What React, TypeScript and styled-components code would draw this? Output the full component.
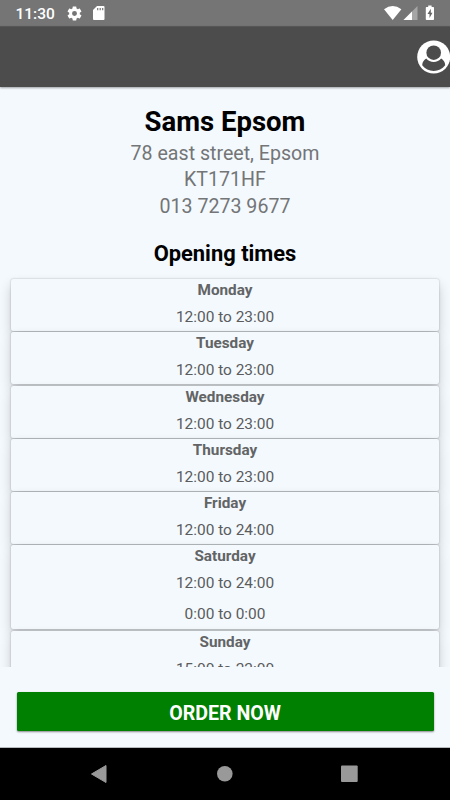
import React from "react";
import styled, { createGlobalStyle } from "styled-components";

const Global = createGlobalStyle`
  * { box-sizing: border-box; }
  html, body { margin: 0; padding: 0; overflow: hidden; }
  body { font-family: Roboto, "Liberation Sans", sans-serif; }
`;

const Screen = styled.div`
  width: 450px;
  height: 800px;
  display: flex;
  flex-direction: column;
  background: #f4f9fe;
`;

const StatusBar = styled.header`
  height: 26px;
  flex: none;
  display: flex;
  align-items: center;
  padding: 0 14px 0 15.5px;
  background: #757575;
  color: #fff;
`;

const Clock = styled.span`
  width: 50px;
  font-size: 15.5px;
  font-weight: 500;
  line-height: 26px;
  padding-top: 2px;
`;

const StatusIcons = styled.div<{ $end?: boolean }>`
  display: flex;
  align-items: center;
  gap: ${(p) => (p.$end ? "1px" : "9px")};
  margin-left: ${(p) => (p.$end ? "auto" : "0")};
  svg { display: block; }
  svg:nth-child(3) { margin-left: 5px; }
`;

const AppBar = styled.nav`
  height: 61px;
  flex: none;
  display: flex;
  align-items: center;
  justify-content: flex-end;
  background: #4c4c4c;
  border-top: 1px solid #565656;
  box-shadow: 0 1px 2px rgba(0, 0, 0, 0.35);
  z-index: 1;
  svg { display: block; }
`;

const Content = styled.main`
  height: 580px;
  flex: none;
  overflow: hidden;
  text-align: center;
  padding-top: 17px;
`;

const Title = styled.h1`
  margin: 0;
  font-size: 27.5px;
  line-height: 36px;
  font-weight: 700;
  color: #000;
`;

const Address = styled.address`
  font-style: normal;
  font-size: 19.6px;
  line-height: 26.4px;
  font-weight: 400;
  color: #737576;
  padding-top: 0.8px;
`;

const Subtitle = styled.h2`
  margin: 20.5px 0 12.4px;
  font-size: 21.9px;
  line-height: 26px;
  font-weight: 700;
  color: #000;
`;

const DayList = styled.section`
  display: flex;
  flex-direction: column;
  gap: 1.3px;
  margin: 0 11px;
`;

const DayCard = styled.article`
  border-radius: 2px;
  background: #f4f9fe;
  box-shadow: 0 0 2px rgba(0, 0, 0, 0.28), 0 6px 12px rgba(0, 0, 0, 0.19);
  position: relative;
`;

const DayName = styled.h3`
  margin: 0;
  font-size: 15.3px;
  line-height: 22.4px;
  height: 22px;
  font-weight: 700;
  color: #626465;
`;

const Hours = styled.p`
  margin: 0;
  height: 30px;
  font-size: 15.45px;
  line-height: 33px;
  font-weight: 400;
  color: #5a5c5d;
  & + & { height: 32px; line-height: 35px; }
`;

const Footer = styled.footer`
  height: 81px;
  flex: none;
  padding: 25px 16.5px 0;
  background: #f4f9fe;
  border-bottom: 1px solid #b5babd;
  position: relative;
`;

const OrderButton = styled.button`
  display: block;
  width: 100%;
  height: 39px;
  border: 0;
  border-radius: 1.5px;
  padding: 3px 0 0;
  background: #008000;
  color: #fff;
  font: 700 19.6px/38px Roboto, "Liberation Sans", sans-serif;
  box-shadow: 0 1px 2px rgba(0, 0, 0, 0.45);
`;

const SystemNav = styled.div`
  height: 52px;
  flex: none;
  display: grid;
  grid-template-columns: 162px 125px 163px;
  background: #000;
  svg { display: block; }
`;

const days = [
  { name: "Monday", hours: ["12:00 to 23:00"] },
  { name: "Tuesday", hours: ["12:00 to 23:00"] },
  { name: "Wednesday", hours: ["12:00 to 23:00"] },
  { name: "Thursday", hours: ["12:00 to 23:00"] },
  { name: "Friday", hours: ["12:00 to 24:00"] },
  { name: "Saturday", hours: ["12:00 to 24:00", "0:00 to 0:00"] },
  { name: "Sunday", hours: ["15:00 to 22:00"] },
];

const GearIcon = () => (
  <svg width="17" height="17" viewBox="0 0 24 24" fill="#fff">
    <path d="M19.43 12.98c.04-.32.07-.64.07-.98s-.03-.66-.07-.98l2.11-1.65c.19-.15.24-.42.12-.64l-2-3.46c-.12-.22-.39-.3-.61-.22l-2.49 1c-.52-.4-1.08-.73-1.69-.98l-.38-2.65C14.46 2.18 14.25 2 14 2h-4c-.25 0-.46.18-.49.42l-.38 2.65c-.61.25-1.17.59-1.69.98l-2.49-1c-.23-.09-.49 0-.61.22l-2 3.46c-.13.22-.07.49.12.64l2.11 1.65c-.04.32-.07.65-.07.98s.03.66.07.98l-2.11 1.65c-.19.15-.24.42-.12.64l2 3.46c.12.22.39.3.61.22l2.49-1c.52.4 1.08.73 1.69.98l.38 2.65c.03.24.24.42.49.42h4c.25 0 .46-.18.49-.42l.38-2.65c.61-.25 1.17-.59 1.69-.98l2.49 1c.23.09.49 0 .61-.22l2-3.46c.12-.22.07-.49-.12-.64l-2.11-1.65zM12 15.5A3.5 3.5 0 1 1 12 8.500a3.500 3.500 0 0 1 0 7z" />
  </svg>
);

const CardIcon = () => (
  <svg width="14" height="16" viewBox="0 0 14 16">
    <path d="M5 1h6.500a1 1 0 0 1 1 1v12a1 1 0 0 1-1 1h-9.500a1 1 0 0 1-1-1V5z" fill="#fff" />
    <path d="M5.700 3v2.200M8.200 3v2.200M10.700 3v2.200" stroke="#757575" strokeWidth="1.200" />
  </svg>
);

const WifiIcon = () => (
  <svg width="19" height="16" viewBox="0 0 19 16">
    <path d="M1 4.200Q9.700-2.200 18.400 4.200L9.700 15z" fill="#fff" />
  </svg>
);

const SignalIcon = () => (
  <svg width="15" height="16" viewBox="0 0 15 16">
    <path d="M14.500 1v14H.5z" fill="#a5a5a5" />
    <path d="M9 6.500V15H.5z" fill="#fff" />
  </svg>
);

const BatteryIcon = () => (
  <svg width="12" height="16" viewBox="0 0 12 16">
    <path d="M4.200.5h3.400V2H9.200a.8.800 0 0 1 .8.800v11.400a.8.800 0 0 1-.8.800H2.600a.8.800 0 0 1-.8-.8V2.800A.8.800 0 0 1 2.600 2h1.600z" fill="#fff" />
    <path d="M6.800 3.800 3.500 9h2v4l3-5.200h-1.700z" fill="#656565" />
  </svg>
);

const ProfileIcon = () => (
  <svg width="33" height="34" viewBox="0 0 33 34">
    <circle cx="16.700" cy="17" r="16.500" fill="#fff" />
    <circle cx="16.700" cy="12.700" r="7.300" fill="#4c4c4c" />
    <path d="M9.200 18.600C6.900 19.800 5.300 22.400 5.200 25.300C8.100 28.900 12.200 31 16.700 31s8.600-2.100 11.500-5.700c-.1-2.900-1.700-5.500-4-6.700-1.900 2.200-4.500 3.400-7.500 3.400s-5.600-1.200-7.500-3.400z" fill="#4c4c4c" />
  </svg>
);

export default function App() {
  return (
    <>
      <Global />
      <Screen>
        <StatusBar>
          <Clock>11:30</Clock>
          <StatusIcons><GearIcon /><CardIcon /></StatusIcons>
          <StatusIcons $end><WifiIcon /><SignalIcon /><BatteryIcon /></StatusIcons>
        </StatusBar>
        <AppBar><ProfileIcon /></AppBar>
        <Content>
          <Title>Sams Epsom</Title>
          <Address>
            <div>78 east street, Epsom</div>
            <div>KT171HF</div>
            <div>013 7273 9677</div>
          </Address>
          <Subtitle>Opening times</Subtitle>
          <DayList>
            {days.map((day) => (
              <DayCard key={day.name}>
                <DayName>{day.name}</DayName>
                {day.hours.map((h) => <Hours key={h}>{h}</Hours>)}
              </DayCard>
            ))}
          </DayList>
        </Content>
        <Footer><OrderButton>ORDER NOW</OrderButton></Footer>
        <SystemNav>
          <svg width="162" height="52" viewBox="0 0 162 52">
            <path d="M91.500 26 106 17.500v17z" fill="#999" stroke="#999" strokeLinejoin="round" />
          </svg>
          <svg width="125" height="52" viewBox="0 0 125 52">
            <circle cx="62.800" cy="25.700" r="7.800" fill="#999" />
          </svg>
          <svg width="163" height="52" viewBox="0 0 163 52">
            <rect x="54" y="17.400" width="16.700" height="16.600" rx="1" fill="#999" />
          </svg>
        </SystemNav>
      </Screen>
    </>
  );
}
